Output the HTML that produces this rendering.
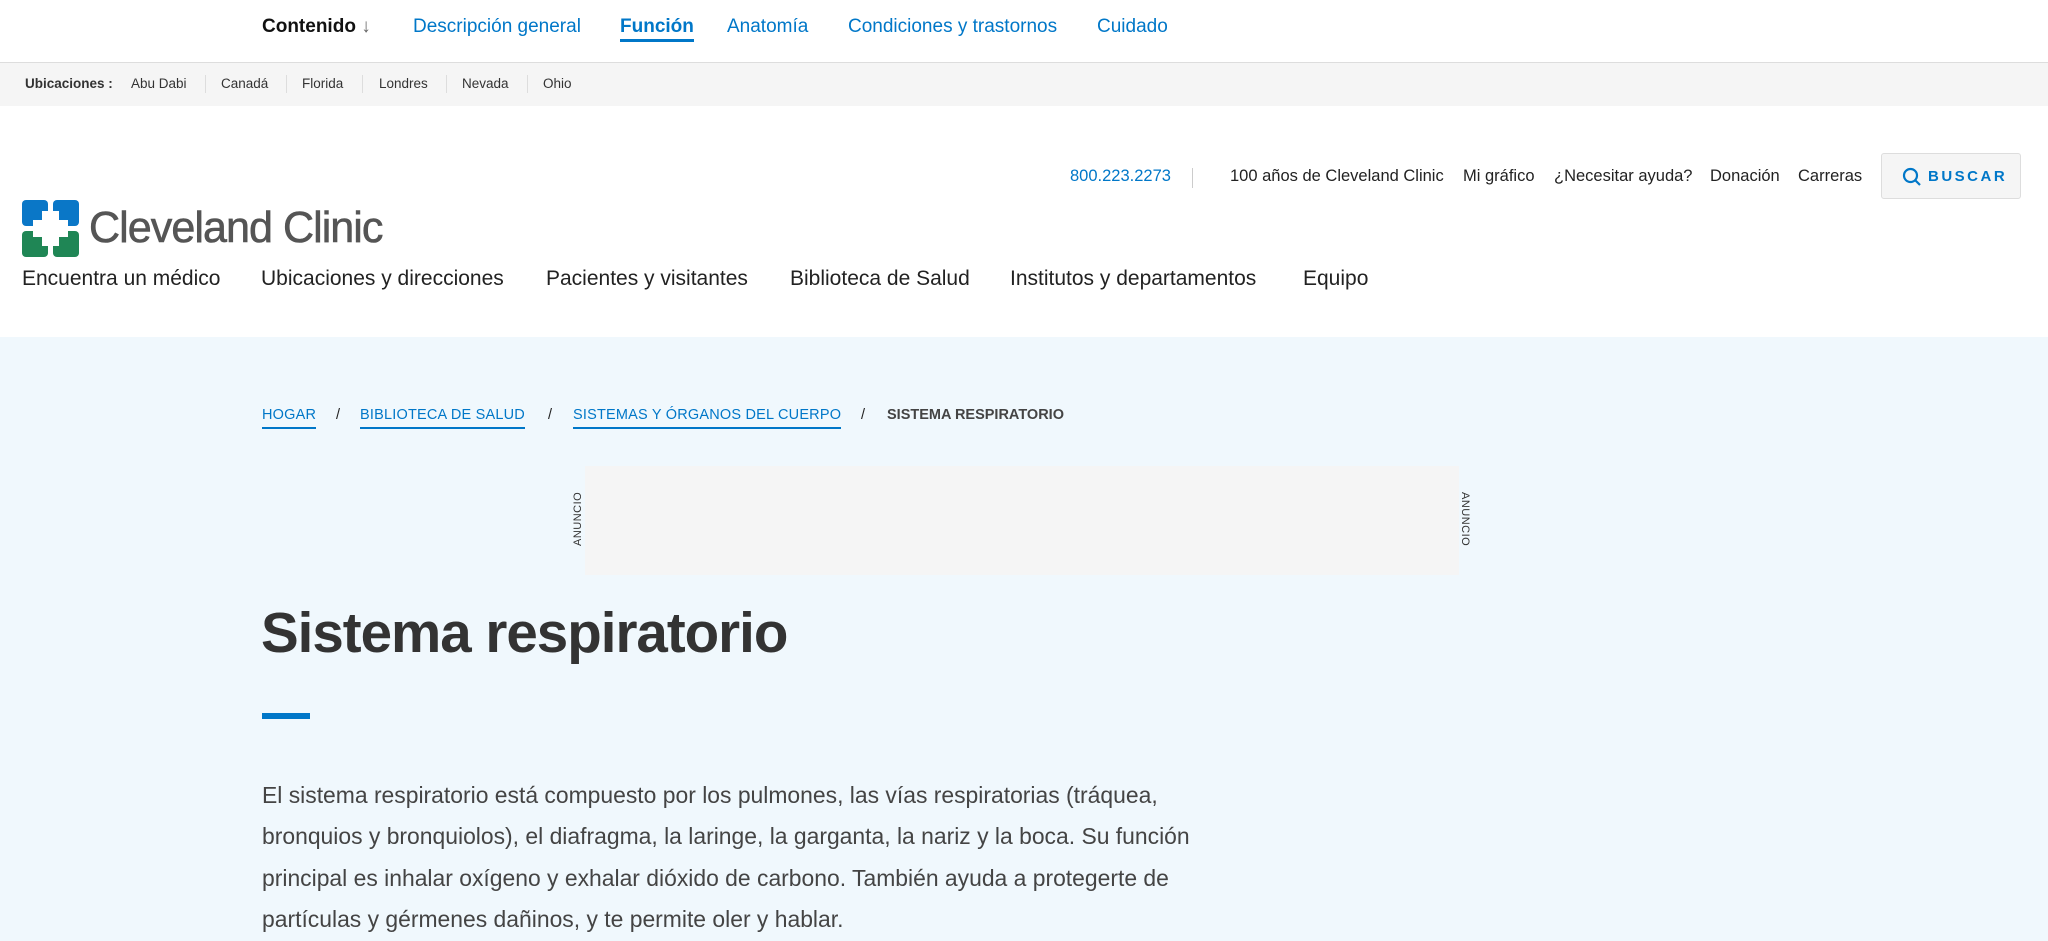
<!DOCTYPE html>
<html><head><meta charset="utf-8"><style>
*{margin:0;padding:0;box-sizing:border-box}
body{width:2048px;height:941px;overflow:hidden;font-family:"Liberation Sans",sans-serif;background:#f0f8fd;position:relative}
.a{position:absolute;white-space:nowrap}
#top{position:absolute;left:0;top:0;width:2048px;height:63px;background:#fff;border-bottom:1px solid #ddd}
#top .a{top:16px;font-size:19px;color:#0077c8}
#loc{position:absolute;left:0;top:63px;width:2048px;height:43px;background:#f5f5f5}
#loc .a{top:13px;font-size:13.5px;color:#333}
#loc .s{top:12px;width:1px;height:18px;background:#ddd}
#hdr{position:absolute;left:0;top:106px;width:2048px;height:231px;background:#fff}
.u{font-size:16.5px;color:#222;top:61px}
.n{font-size:21px;color:#222;top:161px}
.bc{top:407px;font-size:14.5px;color:#0077c8;letter-spacing:.2px;border-bottom:2px solid #0077c8;padding-bottom:4px}
.sl{top:407px;font-size:14.5px;color:#222}
.p{left:262px;font-size:22.9px;color:#444}
</style></head><body>
<div id="top">
<div class="a" style="left:262px;color:#111;font-weight:bold">Contenido <span style="font-weight:normal;color:#666">&#8595;</span></div>
<div class="a" style="left:413px">Descripción general</div>
<div class="a" style="left:620px;font-weight:bold;border-bottom:3px solid #0077c8;padding-bottom:1px">Función</div>
<div class="a" style="left:727px">Anatomía</div>
<div class="a" style="left:848px">Condiciones y trastornos</div>
<div class="a" style="left:1097px">Cuidado</div>
</div>
<div id="loc">
<div class="a" style="left:25px;font-weight:bold">Ubicaciones :</div>
<div class="a" style="left:131px">Abu Dabi</div><div class="a s" style="left:205px"></div>
<div class="a" style="left:221px">Canadá</div><div class="a s" style="left:286px"></div>
<div class="a" style="left:302px">Florida</div><div class="a s" style="left:362px"></div>
<div class="a" style="left:379px">Londres</div><div class="a s" style="left:446px"></div>
<div class="a" style="left:462px">Nevada</div><div class="a s" style="left:527px"></div>
<div class="a" style="left:543px">Ohio</div>
</div>
<div id="hdr">
<div class="a u" style="left:1070px;color:#0077c8">800.223.2273</div>
<div class="a" style="left:1192px;top:62px;width:1px;height:20px;background:#ccc"></div>
<div class="a u" style="left:1230px">100 años de Cleveland Clinic</div>
<div class="a u" style="left:1463px">Mi gráfico</div>
<div class="a u" style="left:1554px">¿Necesitar ayuda?</div>
<div class="a u" style="left:1710px">Donación</div>
<div class="a u" style="left:1798px">Carreras</div>
<div class="a" style="left:1881px;top:47px;width:140px;height:46px;background:#f5f5f5;border:1px solid #ddd;border-radius:3px;color:#0077c8;font-weight:bold;font-size:15px;letter-spacing:2.5px;padding:14px 0 0 46px">BUSCAR
<svg style="position:absolute;left:20px;top:13px" width="20" height="20" viewBox="0 0 20 20"><circle cx="8.5" cy="8.5" r="6.5" fill="none" stroke="#0077c8" stroke-width="2.2"/><path d="M13 13l5 5" stroke="#0077c8" stroke-width="2.2"/></svg></div>
<svg class="a" style="left:22px;top:94px" width="57" height="57" viewBox="0 0 57 57">
<rect x="0" y="0" width="26" height="26" rx="4" fill="#0a77c7"/>
<rect x="31" y="0" width="26" height="26" rx="4" fill="#0a77c7"/>
<rect x="0" y="31" width="26" height="26" rx="4" fill="#1f8655"/>
<rect x="31" y="31" width="26" height="26" rx="4" fill="#1f8655"/>
<path d="M20 11h17v9h9v17h-9v9h-17v-9h-9v-17h9z" fill="#fff"/>
</svg>
<div class="a" style="left:89px;top:97px;font-size:44px;color:#555;letter-spacing:-1px;transform:scaleX(0.98);transform-origin:0 0;-webkit-text-stroke:0.6px #555">Cleveland Clinic</div>
<div class="a n" style="left:22px">Encuentra un médico</div>
<div class="a n" style="left:261px">Ubicaciones y direcciones</div>
<div class="a n" style="left:546px">Pacientes y visitantes</div>
<div class="a n" style="left:790px">Biblioteca de Salud</div>
<div class="a n" style="left:1010px">Institutos y departamentos</div>
<div class="a n" style="left:1303px">Equipo</div>
</div>
<div class="a bc" style="left:262px">HOGAR</div><div class="a sl" style="left:336px">/</div>
<div class="a bc" style="left:360px">BIBLIOTECA DE SALUD</div><div class="a sl" style="left:548px">/</div>
<div class="a bc" style="left:573px">SISTEMAS Y ÓRGANOS DEL CUERPO</div><div class="a sl" style="left:861px">/</div>
<div class="a" style="left:887px;top:407px;font-size:14.5px;font-weight:bold;color:#444">SISTEMA RESPIRATORIO</div>
<div class="a" style="left:585px;top:466px;width:874px;height:109px;background:#f5f5f5"></div>
<div class="a" style="left:572px;top:546px;font-size:11px;color:#333;transform:rotate(-90deg);transform-origin:0 0;letter-spacing:.5px">ANUNCIO</div>
<div class="a" style="left:1471px;top:492px;font-size:11px;color:#333;transform:rotate(90deg);transform-origin:0 0;letter-spacing:.5px">ANUNCIO</div>
<div class="a" style="left:261px;top:600px;font-size:56.5px;font-weight:bold;color:#333;letter-spacing:-1px">Sistema respiratorio</div>
<div class="a" style="left:262px;top:713px;width:48px;height:6px;background:#0077c8"></div>
<div class="a p" style="top:782px">El sistema respiratorio está compuesto por los pulmones, las vías respiratorias (tráquea,</div>
<div class="a p" style="top:823px">bronquios y bronquiolos), el diafragma, la laringe, la garganta, la nariz y la boca. Su función</div>
<div class="a p" style="top:865px">principal es inhalar oxígeno y exhalar dióxido de carbono. También ayuda a protegerte de</div>
<div class="a p" style="top:906px">partículas y gérmenes dañinos, y te permite oler y hablar.</div>
</body></html>
